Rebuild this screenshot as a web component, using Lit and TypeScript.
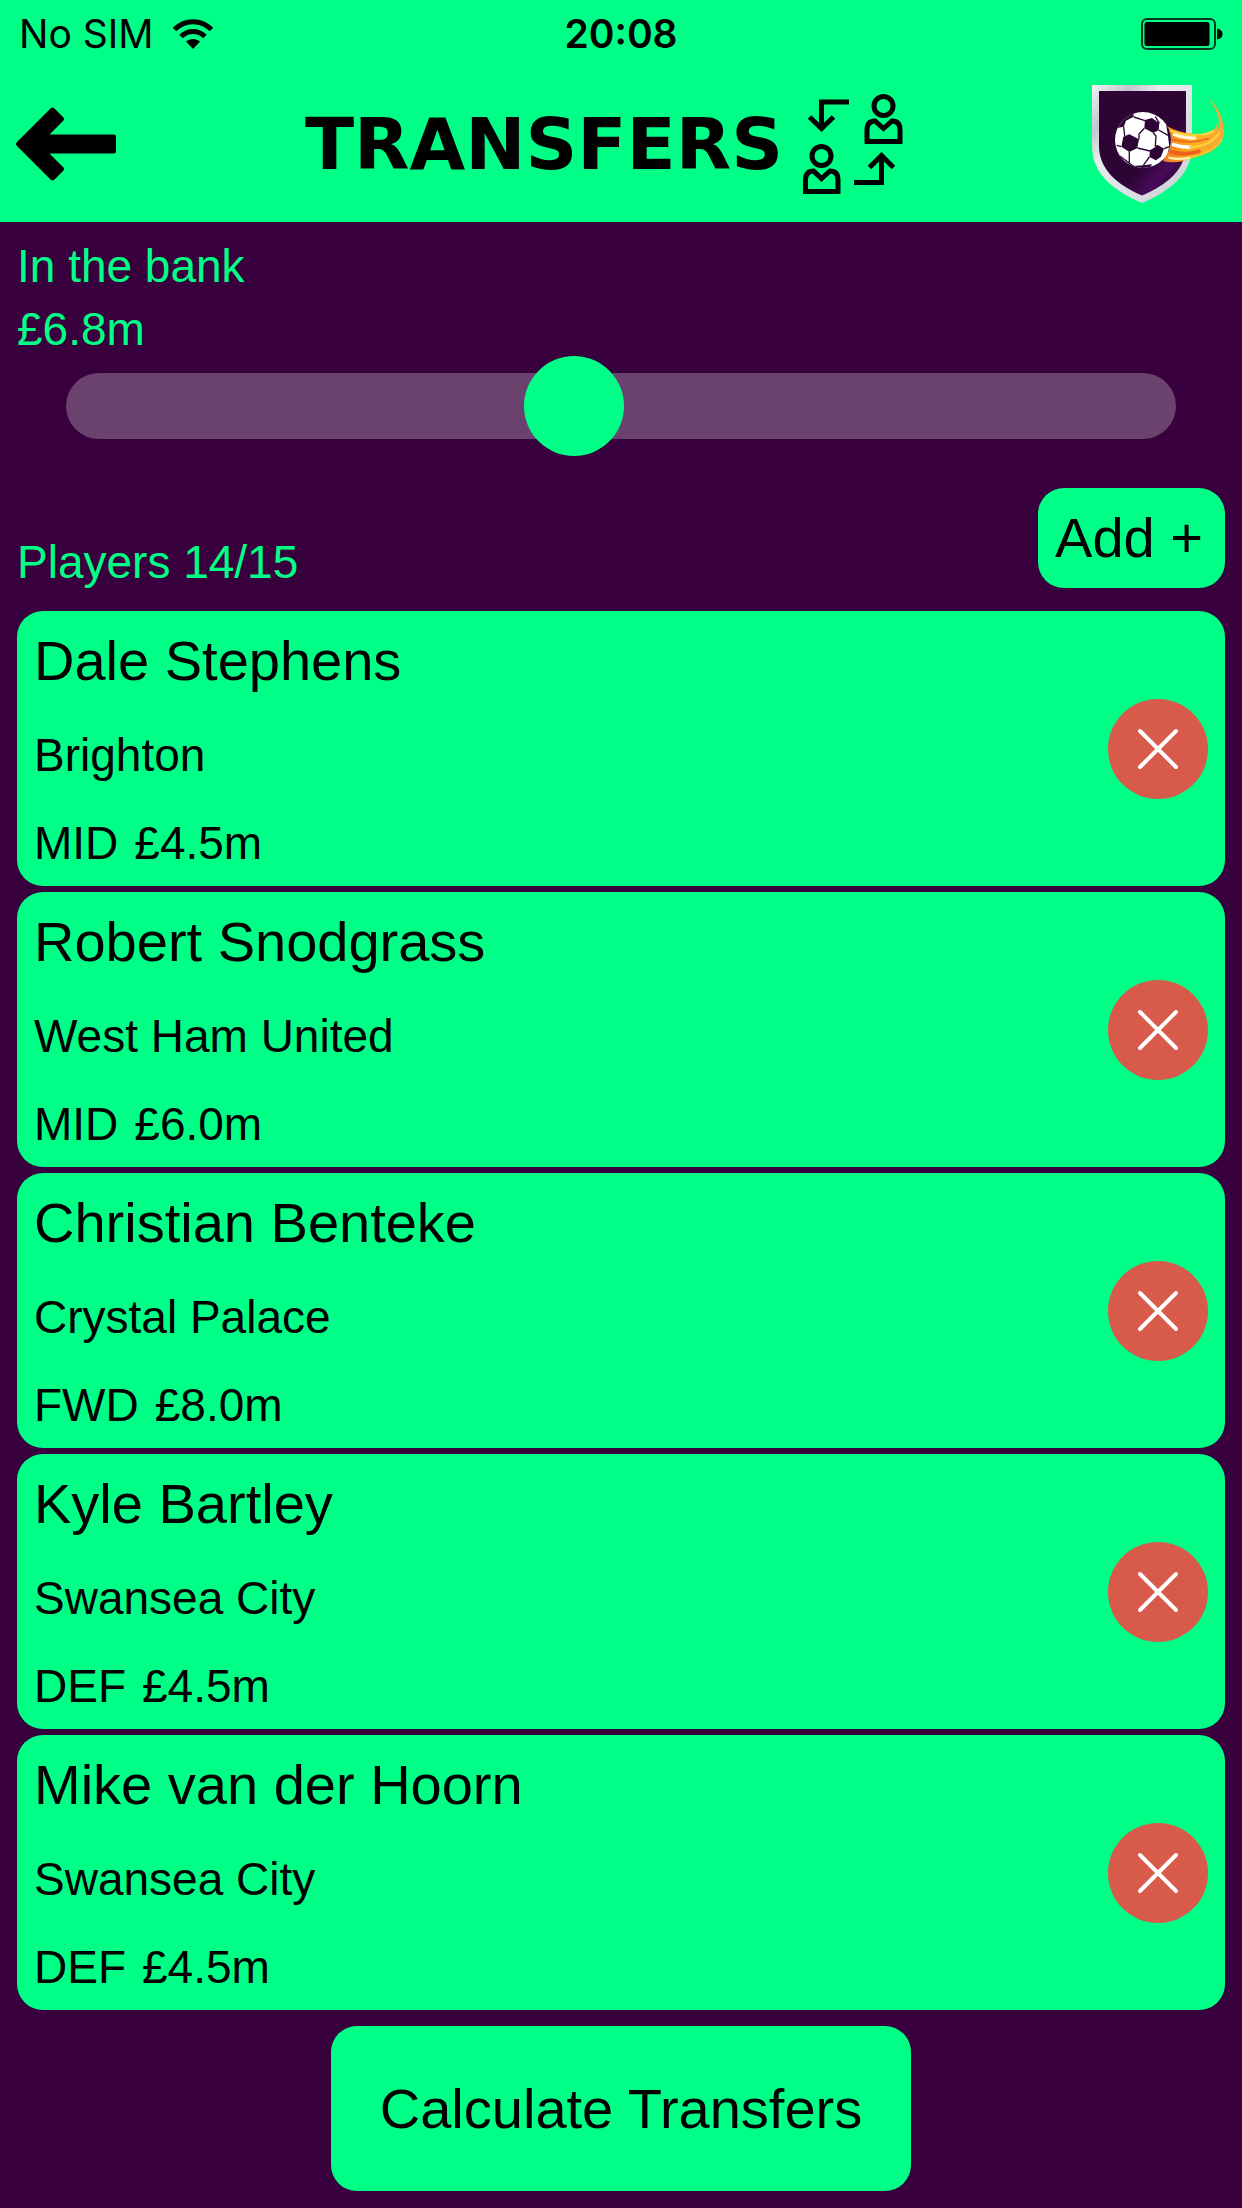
import { LitElement, html, css } from "lit";
import { customElement, property, state } from "lit/decorators.js";

interface Player {
  name: string;
  club: string;
  position: string;
  price: number;
}

const money = (value: number) => `£${value.toFixed(1)}m`;

@customElement("status-bar")
class StatusBar extends LitElement {
  static styles = css`
    :host {
      display: grid;
      grid-template-columns: 1fr auto 1fr;
      align-items: center;
      height: 64px;
      padding: 2px 19px 0;
      font-family: Inter, "Liberation Sans", sans-serif;
      font-size: 39px;
      line-height: 48px;
      color: #000;
    }
    .carrier {
      display: flex;
      align-items: center;
      gap: 20px;
    }
    .time {
      font-weight: 600;
    }
    .battery {
      justify-self: end;
    }
    svg {
      display: block;
    }
  `;

  render() {
    return html`
      <div class="carrier">
        <span>No SIM</span>
        <svg width="40" height="30" viewBox="0 0 40 30" aria-hidden="true">
          <g fill="none" stroke="#000" stroke-width="5">
            <path d="M1.500 10.500C12 0 28 0 38.500 10.500" />
            <path d="M8 17.500C15 10.800 25 10.800 32 17.500" />
          </g>
          <path d="M13 22.500C17 19 23 19 27 22.500L20 30Z" />
        </svg>
      </div>
      <div class="time">20:08</div>
      <svg class="battery" width="82" height="32" viewBox="0 0 82 32" aria-hidden="true">
        <rect x="1" y="1" width="73" height="30" rx="5" fill="none" stroke="#003d20" stroke-width="2" />
        <rect x="3.500" y="4" width="65" height="24" rx="2.500" />
        <path d="M76 10.500Q81.500 11.500 81.500 16T76 21.500Z" />
      </svg>
    `;
  }
}

@customElement("app-header")
class AppHeader extends LitElement {
  static styles = css`
    :host {
      display: grid;
      grid-template-columns: 100px 1fr 134px;
      align-items: center;
      height: 156px;
      padding: 0 16px;
      box-sizing: border-box;
      color: #000;
    }
    svg {
      display: block;
    }
    .back {
      padding: 0;
      border: 0;
      background: none;
      color: inherit;
      cursor: pointer;
    }
    .title {
      display: flex;
      align-items: center;
      justify-content: center;
      gap: 20px;
    }
    h1 {
      margin: 0;
      font: 700 72px/72px "DejaVu Sans", Verdana, sans-serif;
    }
  `;

  render() {
    return html`
      <button class="back" type="button" aria-label="Back">
        <svg width="100" height="74" viewBox="0 0 100 74" aria-hidden="true">
          <path
            d="M1 35L34.500 1.500Q36.500 -.5 38.500 1.500L47 10Q49 12 47 14L33.500 27.500H98Q100 27.500 100 29.500V44.500Q100 46.500 98 46.500H33.500L47 60Q49 62 47 64L38.500 72.500Q36.500 74.500 34.500 72.500L1 39Q-1 37 1 35Z"
          />
        </svg>
      </button>
      <div class="title">
        <h1>TRANSFERS</h1>
        <svg width="100" height="100" viewBox="0 0 100 100" fill="none" stroke="#000" stroke-width="5" aria-hidden="true">
          <path d="M46 8H18.500V34M6.500 23L18.500 34.500L30.500 23" />
          <circle cx="80.500" cy="12" r="9.500" />
          <path d="M64 47.500V36Q64 27 72 27L80.500 34.500L89 27Q97 27 97 36V47.500Z" />
          <circle cx="18.500" cy="62" r="9.500" />
          <path d="M2.500 97.500V86Q2.500 77 10.500 77L18.500 84.500L27 77Q35 77 35 86V97.500Z" />
          <path d="M51 88.500H78.500V62M66.500 73.500L78.500 61.500L90.500 73.500" />
        </svg>
      </div>
      <svg class="crest" width="134" height="120" viewBox="0 0 134 120" aria-hidden="true">
        <defs>
          <linearGradient id="metal" x1="0" y1="0" x2="1" y2="1">
            <stop offset="0" stop-color="#f0f1f4" />
            <stop offset=".2" stop-color="#c3c6cd" />
            <stop offset=".35" stop-color="#e9ebef" />
            <stop offset=".7" stop-color="#d9dce2" />
            <stop offset="1" stop-color="#c5cad1" />
          </linearGradient>
          <linearGradient id="field" x1="0" y1="0" x2="1" y2="1">
            <stop offset=".6" stop-color="#2c0535" />
            <stop offset=".76" stop-color="#480a5a" />
            <stop offset=".9" stop-color="#2c0535" />
          </linearGradient>
          <linearGradient id="flame" x1="0" y1="0" x2="1" y2="0">
            <stop offset="0" stop-color="#f47a20" />
            <stop offset=".5" stop-color="#fbb01c" />
            <stop offset="1" stop-color="#f8a63c" />
          </linearGradient>
          <clipPath id="ball"><circle cx="159" cy="120" r="84" /></clipPath>
        </defs>
        <path fill="url(#metal)" d="M0 1H100V62C100 90 78 107 50 119C22 107 0 90 0 62Z" />
        <path fill="url(#field)" d="M7 7H94V62C94 85 75 101 50 111.500C25 101 7 85 7 62Z" />
        <g transform="translate(58 6) scale(.3333)" fill="none" stroke-linecap="round">
          <path
            fill="url(#flame)"
            d="M50 108C85 126 120 134 158 131C190 128 204 110 203 88C201 66 192 46 177 25C203 48 223 92 222 130C219 160 196 182 160 194C125 202 95 224 40 214Z"
          />
          <path stroke="#ffd23c" stroke-width="7" d="M62 122C100 138 150 144 190 124" />
          <path stroke="#fff6dc" stroke-width="9" d="M72 134C95 142 115 145 135 145" />
          <path stroke="#f26a1e" stroke-width="5" d="M68 149C100 157 140 158 175 146" />
          <path stroke="#fff" stroke-width="11" d="M70 164C90 170 105 172 120 171" />
          <path stroke="#ffd23c" stroke-width="6" d="M120 171C160 170 190 155 208 128" />
          <path stroke="#f0601c" stroke-width="12" d="M64 186C90 193 120 192 146 184" />
          <path stroke="#fff0b0" stroke-width="7" d="M58 203C80 209 100 208 122 202" />
          <path stroke="#fcc52a" stroke-width="5" d="M122 202C160 192 196 180 214 150" />
          <path stroke="#00ff87" stroke-width="3" d="M188 48C204 72 210 98 205 116" />
        </g>
        <g transform="translate(-2 16) scale(.3333)">
          <circle cx="159" cy="120" r="84" fill="#fff" />
          <g clip-path="url(#ball)" fill="#2c0535">
            <path d="M70 90L85 45L130 30L131 50L108 62L101 80L82 84Z" />
            <path d="M165 60L186 54L208 70L206 90L190 99L163 85Z" />
            <path d="M100 110L118 103L147 118L142 144L118 156L94 140Z" />
            <path d="M180 151L205 136L222 146L213 170L198 181L178 171Z" />
            <path d="M228 72L250 100L250 160L230 172L238 140L234 108Z" />
            <path d="M128 198L160 196L186 193L178 210H130Z" />
            <path
              fill="none"
              stroke="#2c0535"
              stroke-width="4"
              d="M131 51L165 62M101 80L104 108M163 85L147 102L147 118M190 99L198 108L196 138L205 138M142 144L180 153M118 156V190L132 200M206 90L234 106M178 171L160 196M208 70L196 50M94 140L80 136M118 190L90 168M222 146L238 140"
            />
          </g>
        </g>
      </svg>
    `;
  }
}

@customElement("player-card")
class PlayerCard extends LitElement {
  @property({ attribute: false }) player!: Player;

  static styles = css`
    :host {
      display: flex;
      align-items: center;
      justify-content: space-between;
      box-sizing: border-box;
      padding: 14px 17px 13px;
      border-radius: 26px;
      background: #00ff87;
      color: #000;
    }
    .details {
      display: grid;
      gap: 28px;
    }
    h2,
    p {
      margin: 0;
      font-weight: 400;
    }
    h2 {
      font-size: 56px;
      line-height: 72px;
    }
    p {
      font-size: 46px;
      line-height: 60px;
    }
    .price {
      display: flex;
      gap: 16px;
    }
    .remove {
      flex: none;
      padding: 0;
      border: 0;
      border-radius: 50%;
      background: none;
      cursor: pointer;
    }
    svg {
      display: block;
    }
  `;

  render() {
    const { name, club, position, price } = this.player;
    return html`
      <div class="details">
        <h2>${name}</h2>
        <p>${club}</p>
        <p class="price"><span>${position}</span><span>${money(price)}</span></p>
      </div>
      <button
        class="remove"
        type="button"
        aria-label="Remove ${name}"
        @click=${() => this.dispatchEvent(new CustomEvent("remove"))}
      >
        <svg width="100" height="100" viewBox="0 0 50 50" aria-hidden="true">
          <circle cx="25" cy="25" r="25" fill="#d75a4a" />
          <path d="M16 16L34 34M34 16L16 34" fill="none" stroke="#fff" stroke-width="2" stroke-linecap="round" />
        </svg>
      </button>
    `;
  }
}

@customElement("app-root")
class AppRoot extends LitElement {
  @state() private bank = 6.8;
  @state() private count = 14;
  @state() private players: Player[] = [
    { name: "Dale Stephens", club: "Brighton", position: "MID", price: 4.5 },
    { name: "Robert Snodgrass", club: "West Ham United", position: "MID", price: 6 },
    { name: "Christian Benteke", club: "Crystal Palace", position: "FWD", price: 8 },
    { name: "Kyle Bartley", club: "Swansea City", position: "DEF", price: 4.5 },
    { name: "Mike van der Hoorn", club: "Swansea City", position: "DEF", price: 4.5 },
  ];

  static styles = css`
    :host {
      display: flex;
      flex-direction: column;
      min-height: 100vh;
      background: #38003c;
      color: #00ff87;
      font-family: "Liberation Sans", Arial, sans-serif;
    }
    header {
      background: #00ff87;
    }
    main {
      display: flex;
      flex-direction: column;
      padding: 13px 17px 16px;
    }
    .bank {
      display: grid;
      font-size: 46px;
      line-height: 63px;
    }
    .slider {
      -webkit-appearance: none;
      appearance: none;
      height: 100px;
      margin: -5px 49px 0;
      background: none;
      cursor: pointer;
    }
    .slider::-webkit-slider-runnable-track {
      height: 66px;
      border-radius: 33px;
      background: #6b426d;
    }
    .slider::-webkit-slider-thumb {
      -webkit-appearance: none;
      width: 100px;
      height: 100px;
      margin-top: -17px;
      border-radius: 50%;
      background: #00ff87;
    }
    .squad {
      display: flex;
      align-items: flex-end;
      justify-content: space-between;
      margin: 32px 0 23px;
      font-size: 46px;
      line-height: 52px;
    }
    .button {
      border: 0;
      border-radius: 26px;
      background: #00ff87;
      color: #000;
      font: inherit;
      font-size: 56px;
      line-height: 68px;
      cursor: pointer;
    }
    .add {
      padding: 16px 22px 16px 17px;
    }
    .players {
      display: grid;
      gap: 6px;
      margin: 0;
      padding: 0;
      list-style: none;
    }
    .calculate {
      align-self: center;
      margin-top: 16px;
      padding: 49px 49px 48px;
    }
  `;

  private remove(player: Player) {
    this.players = this.players.filter((p) => p !== player);
    this.count -= 1;
    this.bank += player.price;
  }

  render() {
    return html`
      <header>
        <status-bar></status-bar>
        <app-header></app-header>
      </header>
      <main>
        <div class="bank">
          <label for="bank">In the bank</label>
          <output for="bank">${money(this.bank)}</output>
        </div>
        <input
          id="bank"
          class="slider"
          type="range"
          min="0"
          max="15"
          step="0.1"
          .value=${String(this.bank)}
          @input=${(e: Event) => (this.bank = Number((e.target as HTMLInputElement).value))}
        />
        <div class="squad">
          <span>Players ${this.count}/15</span>
          <button class="button add" type="button">Add +</button>
        </div>
        <ul class="players">
          ${this.players.map(
            (player) => html`<li>
              <player-card .player=${player} @remove=${() => this.remove(player)}></player-card>
            </li>`
          )}
        </ul>
        <button class="button calculate" type="button">Calculate Transfers</button>
      </main>
    `;
  }
}
